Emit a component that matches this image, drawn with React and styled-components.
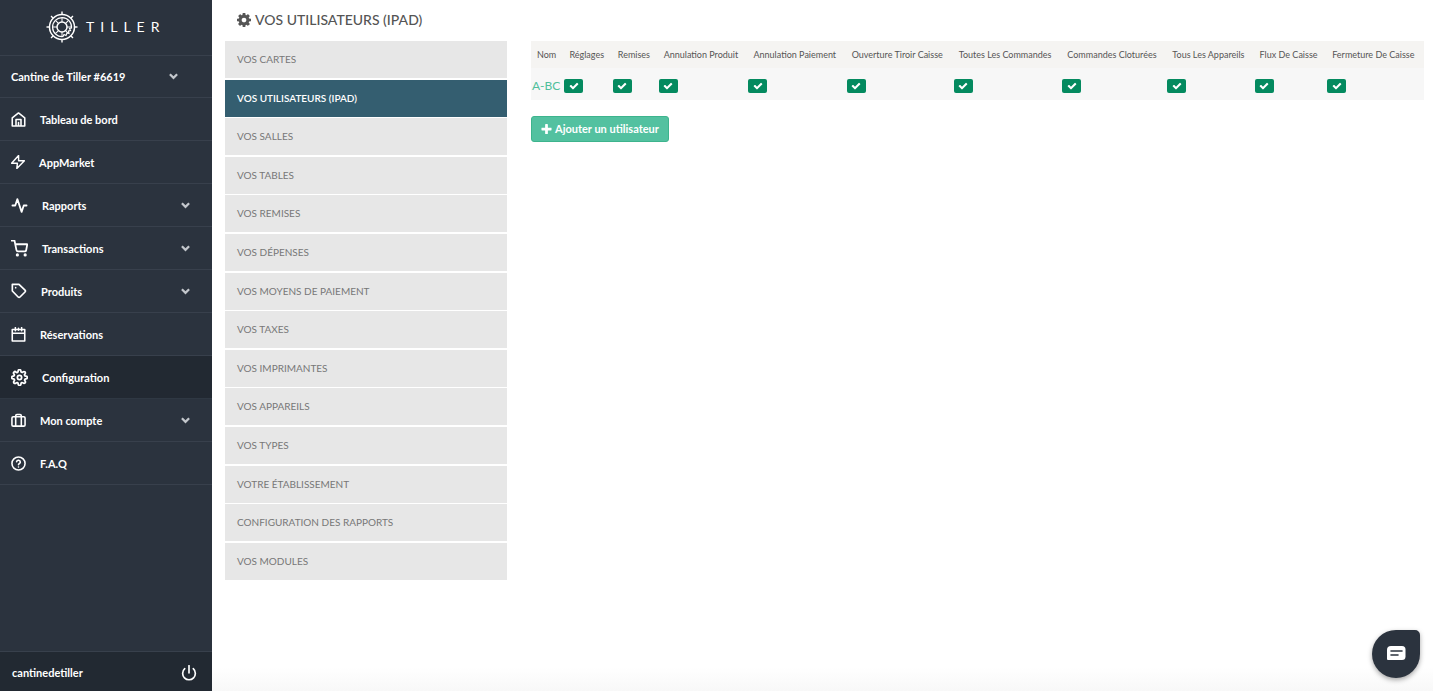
import React from 'react';
import styled, { createGlobalStyle } from 'styled-components';

const GlobalStyle = createGlobalStyle`
  *, *::before, *::after { box-sizing: border-box; }
  body {
    margin: 0;
    background: #fff;
    color: #555;
    font-family: Lato, "Liberation Sans", sans-serif;
    font-size: 12px;
    line-height: 16px;
  }
  button { font: inherit; }
  a { color: inherit; text-decoration: none; }
`;

const Page = styled.div`
  display: flex;
  min-height: 100vh;
`;

const Sidebar = styled.aside`
  display: flex;
  flex-direction: column;
  flex: 0 0 212px;
  height: 100vh;
  position: sticky;
  top: 0;
  background: #2b333e;
  color: #fff;
  font-size: 11px;
  font-weight: 700;
`;

const Brand = styled.a`
  display: flex;
  align-items: center;
  gap: 8px;
  height: 56px;
  padding: 0 0 2px 46px;
  border-bottom: 1px solid #38404c;
`;

const Wordmark = styled.span`
  font-size: 14px;
  font-weight: 400;
  letter-spacing: 6px;
`;

const StoreButton = styled.button`
  display: flex;
  align-items: center;
  justify-content: space-between;
  height: 42px;
  padding: 0 34px 0 11px;
  border: 0;
  border-bottom: 1px solid #38404c;
  background: none;
  color: inherit;
  cursor: pointer;
`;

const NavLink = styled.a`
  display: flex;
  align-items: center;
  gap: 14px;
  height: 43px;
  padding: 0 22px 0 11px;
  border-bottom: 1px solid ${(p) => (p.$active ? '#2f3843' : '#38404c')};
  background: ${(p) => (p.$active ? '#222932' : 'transparent')};
`;

const NavLabel = styled.span`
  flex: 1;
  padding-top: 2px;
`;

const LineIcon = styled.svg`
  flex: none;
  fill: none;
  stroke: currentColor;
  stroke-width: 2.5;
  stroke-linecap: round;
  stroke-linejoin: round;
`;

const Caret = styled.svg`
  flex: none;
  width: 9px;
  height: 7px;
  fill: none;
  stroke: #c3c7cc;
  stroke-width: 2;
`;

const Account = styled.div`
  display: flex;
  align-items: center;
  justify-content: space-between;
  height: 40px;
  margin-top: auto;
  padding: 2px 15px 0 12px;
  border-top: 1px solid #38404c;
  background: #222932;
`;

const PowerButton = styled.button`
  display: flex;
  padding: 0;
  border: 0;
  background: none;
  color: #fff;
  cursor: pointer;
`;

const Main = styled.main`
  flex: 1;
  min-width: 0;
  padding: 0 9px 0 13px;
  background: linear-gradient(to top, #f8f8f8, #fff 24px);
`;

const Title = styled.h1`
  display: flex;
  align-items: center;
  gap: 4px;
  height: 41px;
  margin: 0;
  padding: 0 0 2px 12px;
  font-size: 14px;
  font-weight: 500;
`;

const Glyph = styled.svg`
  flex: none;
  fill: currentColor;
`;

const Columns = styled.div`
  display: flex;
  align-items: flex-start;
  gap: 24px;
`;

const Settings = styled.nav`
  display: flex;
  flex-direction: column;
  justify-content: space-between;
  flex: 0 0 282px;
  height: 539px;
`;

const SettingLink = styled.a`
  display: flex;
  align-items: center;
  height: 37px;
  padding: 0 12px 1px;
  background: ${(p) => (p.$active ? '#345e70' : '#e7e7e7')};
  color: ${(p) => (p.$active ? '#fff' : '#777')};
  font-size: 10px;
  font-weight: ${(p) => (p.$active ? 600 : 400)};
`;

const Content = styled.section`
  flex: 1;
  min-width: 0;
`;

const Table = styled.table`
  width: 100%;
  border-collapse: collapse;
  background: #f7f7f7;
`;

const HeadCell = styled.th`
  height: 27px;
  padding: 0 6px;
  background: #f5f4f2;
  font-size: 9px;
  font-weight: 400;
  text-align: left;
  white-space: nowrap;
`;

const Cell = styled.td`
  height: 32px;
  padding: 3px 1px 0;
  white-space: nowrap;
`;

const UserLink = styled.a`
  color: #4fbf9b;
`;

const Tick = styled.label`
  display: flex;
  align-items: center;
  justify-content: center;
  position: relative;
  width: 19px;
  height: 14px;
  border-radius: 2px;
  background: #048a5f;
  color: #fff;
  svg { visibility: hidden; }
  &:has(input:checked) svg { visibility: visible; }
`;

const TickInput = styled.input`
  position: absolute;
  inset: 0;
  width: 100%;
  height: 100%;
  margin: 0;
  opacity: 0;
  cursor: pointer;
`;

const AddButton = styled.button`
  display: flex;
  align-items: center;
  gap: 3px;
  height: 26px;
  margin-top: 16px;
  padding: 0 9px;
  border: 1px solid #3db48d;
  border-radius: 3px;
  background: #53c1a0;
  color: #fff;
  font-size: 11px;
  font-weight: 700;
  cursor: pointer;
`;

const ChatButton = styled.button`
  display: flex;
  align-items: center;
  justify-content: center;
  position: fixed;
  right: 13px;
  bottom: 13px;
  width: 48px;
  height: 48px;
  padding: 0;
  border: 0;
  border-radius: 24px 5px 24px 24px;
  background: #2b333e;
  box-shadow: 0 2px 5px rgba(0, 0, 0, 0.35);
  cursor: pointer;
`;

const navItems = [
  { label: 'Tableau de bord', size: 15, icon: <path d="M2 22.500V9.500L12 1.500l10 8v13zM8 22V12h8v10M12 22v-5" /> },
  { label: 'AppMarket', size: 14, icon: <path d="M13 1 1 14h10l-1 9 13-13H13z" /> },
  { label: 'Rapports', size: 17, icon: <path d="M22 12h-4l-3 9L9 3l-3 9H2" />, menu: true },
  {
    label: 'Transactions',
    size: 17,
    icon: (
      <>
        <path d="M1 1h4l2.700 13.400a2 2 0 0 0 2 1.600h9.700a2 2 0 0 0 2-1.600L23 6H6" />
        <circle cx="9" cy="21" r="1" />
        <circle cx="20" cy="21" r="1" />
      </>
    ),
    menu: true,
  },
  {
    label: 'Produits',
    size: 16,
    icon: <path d="m21 13.500-7.500 7.500a2 2 0 0 1-2.800 0L2 12V2h10l9 8.700a2 2 0 0 1 0 2.800zM7 7h.01" />,
    menu: true,
  },
  { label: 'Réservations', size: 15, icon: <path d="M2 4h20v18.500H2zM2 10h20M7 1v5M17 1v5M12 2v3" /> },
  {
    label: 'Configuration',
    size: 17,
    icon: (
      <>
        <circle cx="12" cy="12" r="3" />
        <path d="M19.400 15a1.650 1.650 0 0 0 .33 1.820l.06.06a2 2 0 1 1-2.830 2.830l-.06-.06a1.650 1.650 0 0 0-2.820 1.170V21a2 2 0 0 1-4 0v-.09a1.650 1.650 0 0 0-2.900-1.180l-.06.06a2 2 0 1 1-2.830-2.830l.06-.06A1.650 1.650 0 0 0 3.090 14H3a2 2 0 0 1 0-4h.09a1.650 1.650 0 0 0 1.180-2.820l-.06-.06a2 2 0 1 1 2.830-2.830l.06.06A1.650 1.650 0 0 0 10 3.090V3a2 2 0 0 1 4 0v.09a1.650 1.650 0 0 0 2.820 1.180l.06-.06a2 2 0 1 1 2.830 2.830l-.06.06A1.650 1.650 0 0 0 20.910 10H21a2 2 0 0 1 0 4h-.09a1.650 1.650 0 0 0-1.510 1z" />
      </>
    ),
    active: true,
  },
  {
    label: 'Mon compte',
    size: 15,
    icon: (
      <>
        <rect x="1.500" y="6" width="21" height="15" rx="2" />
        <path d="M7.500 21V4.500a2 2 0 0 1 2-2h5a2 2 0 0 1 2 2V21" />
      </>
    ),
    menu: true,
  },
  {
    label: 'F.A.Q',
    size: 15,
    icon: (
      <>
        <circle cx="12" cy="12" r="10.500" />
        <path d="M9 9a3 3 0 0 1 5.900 1c0 2-2.900 2.500-2.900 4M12 17.500h.01" />
      </>
    ),
  },
];

const settings = [
  'Vos cartes', 'Vos utilisateurs (iPad)', 'Vos salles', 'Vos tables', 'Vos remises',
  'Vos dépenses', 'Vos moyens de paiement', 'Vos taxes', 'Vos imprimantes', 'Vos appareils',
  'Vos types', 'Votre établissement', 'Configuration des rapports', 'Vos modules',
].map((label) => label.toUpperCase());

const current = settings[1];

const rights = [
  'Réglages', 'Remises', 'Annulation Produit', 'Annulation Paiement', 'Ouverture Tiroir Caisse',
  'Toutes Les Commandes', 'Commandes Cloturées', 'Tous Les Appareils', 'Flux De Caisse', 'Fermeture De Caisse',
];

const Chevron = () => (
  <Caret viewBox="0 0 8 6" aria-hidden="true">
    <path d="m.8 1 3.200 3.200L7.200 1" />
  </Caret>
);

const spokes = [0, 45, 90, 135, 180, 225, 270, 315];

const Wheel = () => (
  <svg width="32" height="32" viewBox="0 0 32 32" fill="none" stroke="#fff" aria-hidden="true">
    <circle cx="16" cy="16" r="12.500" strokeWidth="1.500" />
    <path d="M25.500 17A9.500 9.500 0 1 0 17 25.500l1-2 2 1 1-2.500 2 .5-.5-2.500 2-.5-1-2z" strokeWidth="1.200" />
    <circle cx="16" cy="16" r="5" strokeWidth="1.500" />
    {spokes.map((angle) => (
      <g key={angle} transform={`rotate(${angle} 16 16)`}>
        <path d="M16 .5v3" strokeWidth="1.400" />
        <path d="M16 7v4" strokeWidth="1" />
      </g>
    ))}
  </svg>
);

const Cog = () => (
  <Glyph width="14" height="14" viewBox="0 128 1536 1536" aria-hidden="true">
    <path d="M1024 896q0-106-75-181t-181-75-181 75-75 181 75 181 181 75 181-75 75-181zm512-109v222q0 12-8 23t-20 13l-185 28q-19 54-39 91 35 50 107 138 10 12 10 25t-9 23q-27 37-99 108t-94 71q-12 0-26-9l-138-108q-44 23-91 38-16 136-29 186-7 28-36 28h-222q-14 0-24.500-8.500t-11.500-21.500l-28-184q-49-16-90-37l-141 107q-10 9-25 9-14 0-25-11-126-114-165-168-7-10-7-23 0-12 8-23 15-21 51-66.500t54-70.500q-27-50-41-99l-183-27q-13-2-21-12.500t-8-23.500v-222q0-12 8-23t19-13l186-28q14-46 39-92-40-57-107-138-10-12-10-24 0-10 9-23 26-36 98.500-107.500t94.500-71.500q13 0 26 10l138 107q44-23 91-38 16-136 29-186 7-28 36-28h222q14 0 24.500 8.500t11.500 21.500l28 184q49 16 90 37l142-107q9-9 24-9 13 0 25 10 129 119 165 170 7 8 7 22 0 12-8 23-15 21-51 66.500t-54 70.500q26 50 41 98l183 28q13 2 21 12.500t8 23.500z" />
  </Glyph>
);

const Check = () => (
  <Glyph width="10" height="10" viewBox="0 0 1792 1792" aria-hidden="true">
    <path d="M1671 566q0 40-28 68l-724 724-136 136q-28 28-68 28t-68-28l-136-136-362-362q-28-28-28-68t28-68l136-136q28-28 68-28t68 28l294 295 656-657q28-28 68-28t68 28l136 136q28 28 28 68z" />
  </Glyph>
);

const Plus = () => (
  <Glyph width="11" height="11" viewBox="128 128 1536 1536" aria-hidden="true">
    <path d="M1600 736v192q0 40-28 68t-68 28h-416v416q0 40-28 68t-68 28h-192q-40 0-68-28t-28-68v-416h-416q-40 0-68-28t-28-68v-192q0-40 28-68t68-28h416v-416q0-40 28-68t68-28h192q40 0 68 28t28 68v416h416q40 0 68 28t28 68z" />
  </Glyph>
);

export default function App() {
  return (
    <Page>
      <GlobalStyle />
      <Sidebar>
        <Brand href="#">
          <Wheel />
          <Wordmark>TILLER</Wordmark>
        </Brand>
        <StoreButton type="button">
          Cantine de Tiller #6619
          <Chevron />
        </StoreButton>
        <nav>
          {navItems.map(({ label, size, icon, menu, active }) => (
            <NavLink key={label} href="#" $active={active}>
              <LineIcon width={size} height={size} viewBox="0 0 24 24" aria-hidden="true">
                {icon}
              </LineIcon>
              <NavLabel>{label}</NavLabel>
              {menu && <Chevron />}
            </NavLink>
          ))}
        </nav>
        <Account>
          cantinedetiller
          <PowerButton type="button" aria-label="Déconnexion">
            <LineIcon width="16" height="16" viewBox="0 0 24 24" aria-hidden="true">
              <path d="M18.400 5.600a9.500 9.500 0 1 1-12.800 0M12 1v11" />
            </LineIcon>
          </PowerButton>
        </Account>
      </Sidebar>
      <Main>
        <Title>
          <Cog />
          {current}
        </Title>
        <Columns>
          <Settings>
            {settings.map((label) => (
              <SettingLink key={label} href="#" $active={label === current}>
                {label}
              </SettingLink>
            ))}
          </Settings>
          <Content>
            <Table>
              <thead>
                <tr>
                  <HeadCell>Nom</HeadCell>
                  {rights.map((right) => (
                    <HeadCell key={right}>{right}</HeadCell>
                  ))}
                </tr>
              </thead>
              <tbody>
                <tr>
                  <Cell><UserLink href="#">A-BC</UserLink></Cell>
                  {rights.map((right) => (
                    <Cell key={right}>
                      <Tick>
                        <TickInput type="checkbox" defaultChecked aria-label={right} />
                        <Check />
                      </Tick>
                    </Cell>
                  ))}
                </tr>
              </tbody>
            </Table>
            <AddButton type="button">
              <Plus />
              Ajouter un utilisateur
            </AddButton>
          </Content>
        </Columns>
      </Main>
      <ChatButton type="button" aria-label="Discussion">
        <svg width="20" height="16" viewBox="0 0 20 16" aria-hidden="true">
          <path d="M5 0h11a3.500 3.500 0 0 1 3.500 3.500v7A3.500 3.500 0 0 1 16 14H2a1 1 0 0 1-1-1V4a4 4 0 0 1 4-4z" fill="#fff" />
          <path d="M5 5h11M5 9h7" stroke="#2b333e" strokeWidth="1.600" strokeLinecap="round" />
        </svg>
      </ChatButton>
    </Page>
  );
}
